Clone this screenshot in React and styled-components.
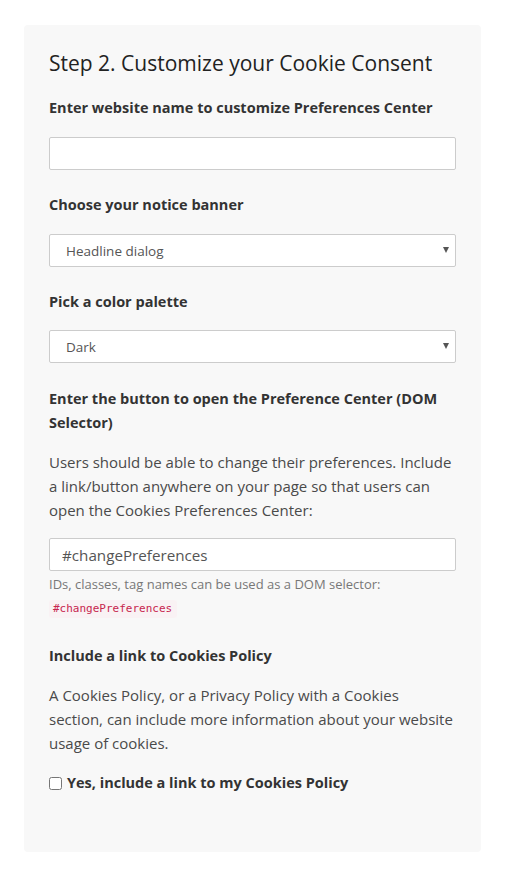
import styled, { createGlobalStyle } from 'styled-components';

const GlobalStyle = createGlobalStyle`
  html, body {
    margin: 0;
    padding: 0;
    background: #fff;
  }
  body {
    font-family: "Open Sans", Lato, sans-serif;
    color: #333;
  }
`;

const Page = styled.div`
  padding: 25px 25px 21px 24px;
`;

const Card = styled.section`
  background: #f8f8f8;
  border-radius: 4px;
  padding: 26px 25px 57px 25px;
`;

const Title = styled.h2`
  margin: 0 0 20px;
  font-size: 21px;
  line-height: 25px;
  font-weight: 400;
  color: #222;
`;

const Label = styled.h4`
  margin: 0 0 ${p => p.$gap ?? 17}px;
  font-size: 14.5px;
  line-height: 24px;
  font-weight: 700;
  color: #333;
`;

const Group = styled.div`
  margin-bottom: ${p => p.$gap ?? 23}px;
`;

const TextInput = styled.input`
  display: block;
  box-sizing: border-box;
  width: 100%;
  height: 33px;
  padding: 0 12px;
  border: 1px solid #ccc;
  border-radius: 2px;
  background: #fff;
  font-family: "Open Sans", sans-serif;
  font-size: 15.2px;
  color: #555;
  outline: none;
`;

const SelectWrap = styled.div`
  position: relative;

  &::after {
    content: '';
    position: absolute;
    right: 7px;
    top: 13px;
    border-left: 3.5px solid transparent;
    border-right: 3.5px solid transparent;
    border-top: 6px solid #555;
    pointer-events: none;
  }
`;

const Select = styled.select`
  display: block;
  box-sizing: border-box;
  width: 100%;
  height: 33px;
  padding: 0 16px;
  border: 1px solid #ccc;
  border-radius: 2px;
  background: #fff;
  appearance: none;
  font-family: "Open Sans", sans-serif;
  font-size: 13.5px;
  color: #555;
  outline: none;
`;

const Text = styled.p`
  margin: 0 0 ${p => p.$gap ?? 16}px;
  font-size: 15px;
  line-height: 24px;
  color: #4a4a4a;
`;

const Help = styled.p`
  margin: 4px 0 7px;
  font-size: 13px;
  line-height: 18px;
  color: #777;
`;

const Code = styled.code`
  display: block;
  width: fit-content;
  padding: 1px 5px 1px 4px;
  border-radius: 3px;
  background: #f9f2f4;
  color: #c7254e;
  font-family: "DejaVu Sans Mono", "Liberation Mono", monospace;
  font-size: 11px;
  line-height: 16px;
`;

const CheckRow = styled.label`
  display: flex;
  align-items: center;
  gap: 5px;
  font-size: 14.5px;
  line-height: 24px;
  font-weight: 700;
  color: #333;
`;

const Check = styled.input`
  margin: 0;
  width: 13px;
  height: 13px;
`;

export default function App() {
  return (
    <>
      <GlobalStyle />
      <Page>
        <Card>
          <Title>Step 2. Customize your Cookie Consent</Title>

          <Group>
            <Label>Enter website name to customize Preferences Center</Label>
            <TextInput type="text" />
          </Group>

          <Group>
            <Label>Choose your notice banner</Label>
            <SelectWrap>
              <Select defaultValue="headline">
                <option value="simple">Simple dialog</option>
                <option value="headline">Headline dialog</option>
                <option value="interstitial">Interstitial</option>
              </Select>
            </SelectWrap>
          </Group>

          <Group $gap={24}>
            <Label $gap={16}>Pick a color palette</Label>
            <SelectWrap>
              <Select defaultValue="dark">
                <option value="light">Light</option>
                <option value="dark">Dark</option>
              </Select>
            </SelectWrap>
          </Group>

          <Group $gap={26}>
            <Label $gap={15}>Enter the button to open the Preference Center (DOM Selector)</Label>
            <Text>
              Users should be able to change their preferences. Include a link/button anywhere on your
              page so that users can open the Cookies Preferences Center:
            </Text>
            <TextInput type="text" defaultValue="#changePreferences" />
            <Help>IDs, classes, tag names can be used as a DOM selector:</Help>
            <Code>#changePreferences</Code>
          </Group>

          <Group $gap={0}>
            <Label $gap={15}>Include a link to Cookies Policy</Label>
            <Text>
              A Cookies Policy, or a Privacy Policy with a Cookies section, can include more
              information about your website usage of cookies.
            </Text>
            <CheckRow>
              <Check type="checkbox" />
              Yes, include a link to my Cookies Policy
            </CheckRow>
          </Group>
        </Card>
      </Page>
    </>
  );
}
